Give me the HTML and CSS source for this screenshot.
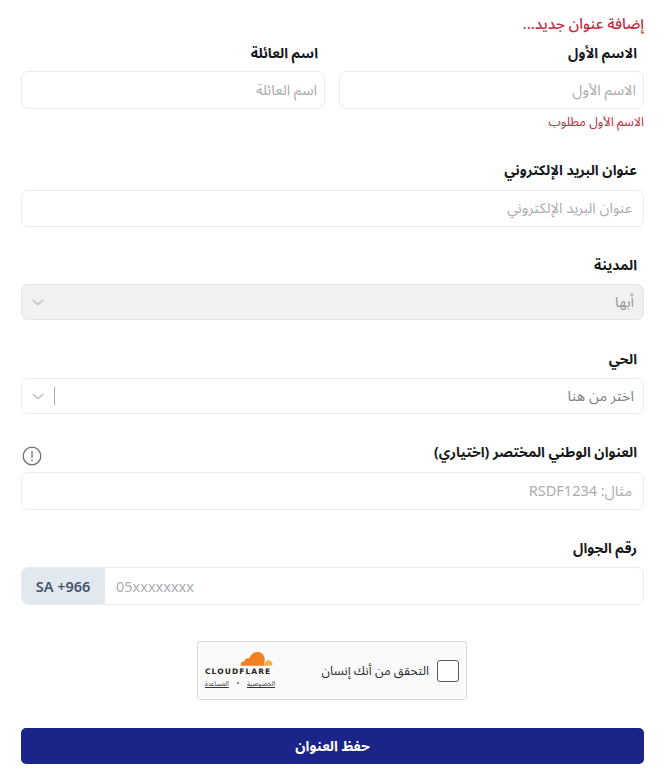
FILE: index.html
```html
<!DOCTYPE html>
<html lang="ar" dir="rtl">
<head>
<meta charset="utf-8">
<title>إضافة عنوان جديد</title>
<link rel="stylesheet" href="styles.css">
</head>
<body>
<form class="form">
  <h1 class="title">إضافة عنوان جديد...</h1>
  <div class="row">
    <div class="field">
      <label class="label">الاسم الأول</label>
      <div class="control input">الاسم الأول</div>
      <p class="error">الاسم الأول مطلوب</p>
    </div>
    <div class="field">
      <label class="label">اسم العائلة</label>
      <div class="control input">اسم العائلة</div>
    </div>
  </div>
  <div class="block email">
    <label class="label">عنوان البريد الإلكتروني</label>
    <div class="control input">عنوان البريد الإلكتروني</div>
  </div>
  <div class="block city">
    <label class="label">المدينة</label>
    <div class="control select disabled">
      <span>أبها</span>
      <svg class="chev" viewBox="0 0 14 8"><path d="M1.5 1.5 7 6.5l5.5-5"/></svg>
    </div>
  </div>
  <div class="block district">
    <label class="label">الحي</label>
    <div class="control select">
      <span>اختر من هنا</span>
      <span class="chev-group"><i class="sep"></i><svg class="chev" viewBox="0 0 14 8"><path d="M1.5 1.5 7 6.5l5.5-5"/></svg></span>
    </div>
  </div>
  <div class="block national">
    <div class="label-row">
      <label class="label">العنوان الوطني المختصر (اختياري)</label>
      <svg class="info" viewBox="0 0 20 20"><circle cx="10" cy="10" r="8.8"/><path d="M10 5.5v5.8M10 13.8v1"/></svg>
    </div>
    <div class="control input">مثال: RSDF1234</div>
  </div>
  <div class="block phone">
    <label class="label">رقم الجوال</label>
    <div class="phone-group" dir="ltr">
      <span class="prefix">SA +966</span>
      <span class="phone-input">05xxxxxxxx</span>
    </div>
  </div>
  <div class="captcha-wrap">
    <div class="captcha">
      <span class="check"></span>
      <span class="captcha-text">التحقق من أنك إنسان</span>
      <div class="brand">
        <svg class="cloud" viewBox="0 0 36 18"><path class="c1" d="M1 17c-1-3 1-5 4-5 0-3 3-4 5-3 2-5 6-8 11-7 4 1 6 5 6 9l-1 6z"/><path class="c2" d="M26 17c1-4 3-6 5-6 3 0 5 3 4 6z"/></svg>
        <span class="wordmark" dir="ltr">CLOUDFLARE</span>
        <span class="links"><u>الخصوصية</u><span>•</span><u>المساعدة</u></span>
      </div>
    </div>
  </div>
  <button class="save" type="button">حفظ العنوان</button>
</form>
</body>
</html>
```
FILE: styles.css
```css
* { box-sizing: border-box; }
html, body { margin: 0; padding: 0; background: #fff; }
body { font-family: "Noto Sans Arabic", "Noto Sans", "Open Sans", "DejaVu Sans", sans-serif; color: #1a1d21; width: 665px; height: 775px; overflow: hidden; }
.form { padding: 14px 21px 0; }
.title { margin: 0; font-size: 15px; line-height: 20px; font-weight: 500; color: #c5283d; }
.row { display: flex; gap: 14px; margin-top: 10px; }
.field { flex: 1 1 0; min-width: 0; }
.label { display: block; font-size: 14px; line-height: 20px; font-weight: 700; color: #17191c; padding: 0 7px; margin-bottom: 7px; }
.control { height: 38px; border: 1px solid #e9ecef; border-radius: 7px; display: flex; align-items: center; justify-content: space-between; padding: 0 7px; font-size: 14.5px; color: #a9adb2; background: #fff; }
.row .field:first-child { flex: 0 0 305px; }
.row .field:last-child { flex: 0 0 304px; }
.error { margin: 5px 0 0; font-size: 12.5px; line-height: 16px; color: #c5283d; }
.block { display: block; }
.email { margin-top: 31px; }
.email .label { margin-bottom: 9px; }
.email .control { height: 37px; padding: 0 11px; }
.city { margin-top: 29px; }
.city .label { margin-bottom: 8px; }
.city .control { height: 36px; }
.district { margin-top: 30px; }
.district .label { margin-bottom: 8px; }
.district .control { height: 36px; }
.national { margin-top: 29px; }
.national .control { padding: 0 11px; }
.phone { margin-top: 29px; }
.select { color: #7d8187; padding-right: 9px; padding-left: 10px; }
.disabled { background: #f1f1f1; color: #97999c; border-color: #e6e6e6; }
.chev { width: 12px; height: 7px; display: block; fill: none; stroke: #c2c5c9; stroke-width: 1.8; stroke-linecap: round; stroke-linejoin: round; }
.chev-group { display: flex; align-items: center; gap: 10px; }
.sep { width: 1px; height: 18px; background: #a6a9ad; display: block; }
.label-row { display: flex; align-items: flex-start; justify-content: space-between; height: 29px; }
.label-row .label { margin: 0; }
.info { width: 20px; height: 20px; margin-left: 1px; margin-top: 3px; fill: none; stroke: #6d7074; stroke-width: 1.3; stroke-linecap: round; }
.phone-group { display: flex; height: 38px; border: 1px solid #e9ecef; border-radius: 7px; overflow: hidden; font-family: "Noto Sans", sans-serif; }
.phone .label { margin-bottom: 8px; }
.prefix { width: 84px; background: #e2e8f0; color: #44546a; font-size: 14.5px; font-weight: 600; display: flex; align-items: center; justify-content: center; margin: -1px 0 -1px -1px; }
.phone-input { flex: 1; display: flex; align-items: center; padding-left: 11px; font-size: 14.5px; color: #a9adb2; }
.captcha-wrap { display: flex; justify-content: center; margin-top: 36px; padding-right: 1px; }
.captcha { width: 270px; height: 59px; border: 1px solid #dcdcdc; border-radius: 3px; background: #fafafa; display: flex; align-items: center; padding: 0 7px; }
.check { width: 22px; height: 22px; border: 1.5px solid #55585c; border-radius: 3px; background: #fff; flex: none; }
.captcha-text { margin-right: 8px; font-size: 12.5px; color: #2b2e32; white-space: nowrap; }
.brand { margin-right: auto; display: flex; flex-direction: column; width: 70px; margin-top: -3px; }
.cloud { width: 33px; height: 17px; display: block; margin-right: 2px; }
.c1 { fill: #f38020; }
.c2 { fill: #faae40; }
.wordmark { font-family: "DejaVu Sans", sans-serif; font-weight: 700; font-size: 7.5px; letter-spacing: 1.1px; line-height: 9px; color: #222; white-space: nowrap; text-align: left; }
.links { display: flex; justify-content: space-between; font-size: 6.5px; line-height: 8px; color: #333; white-space: nowrap; margin-top: 4px; }
.save { display: block; width: 100%; height: 36px; margin-top: 28px; background: #1b2589; color: #fff; border: 0; border-radius: 5px; font-family: inherit; font-size: 14px; font-weight: 700; }
```
